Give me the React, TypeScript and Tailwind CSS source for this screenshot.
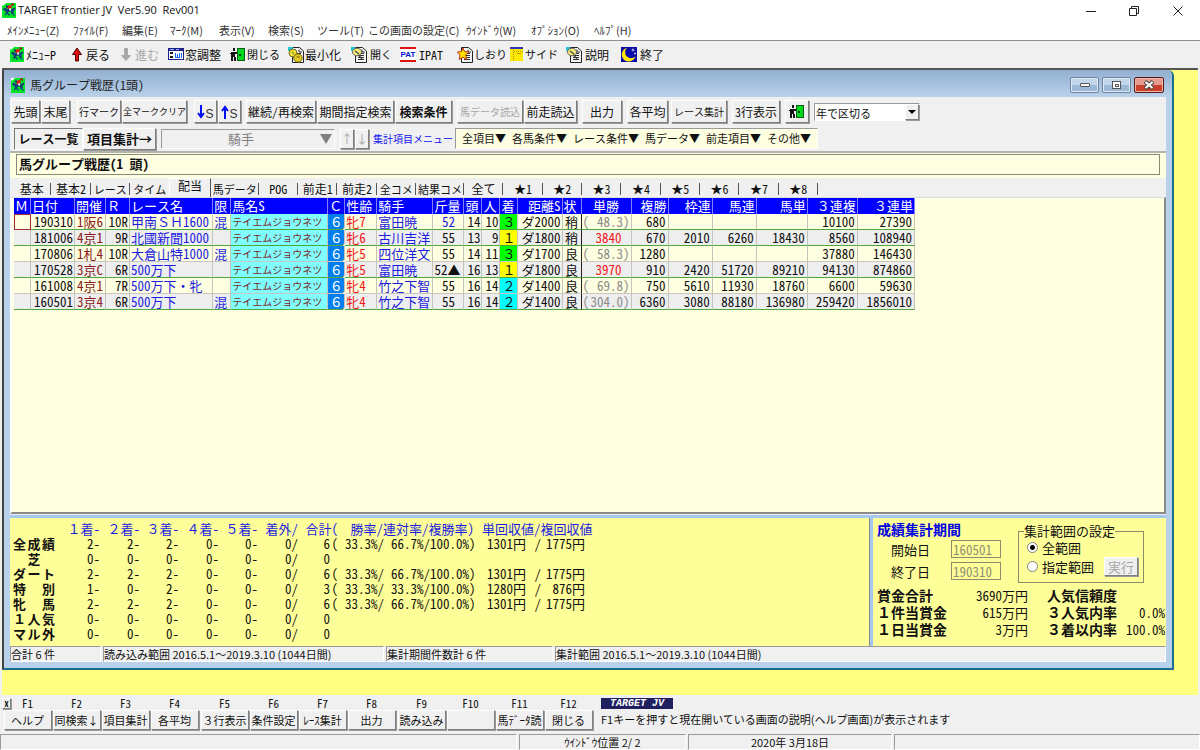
import React from "react";
import clsx from "clsx";

const raised =
  "border border-t-white border-l-white border-r-[#7f7f7f] border-b-[#7f7f7f] shadow-[1px_1px_0_0_#9a9a9a] bg-[#f0f0f0]";
const sunken = "border border-t-[#9a9a9a] border-l-[#9a9a9a] border-r-white border-b-white";

function JockeyIcon() {
  return (
    <svg viewBox="0 0 16 15" className="h-[15px] w-4 shrink-0" aria-hidden="true">
      <rect x="1" width="14" height="15" fill="#00e626" />
      <path d="M1 0h4L2.500 2.500H1z" fill="#ffffff" />
      <path d="M1.500 6.500 4 4.500 6 6H10.500L13.500 4.500 14.500 6 12.500 8 13 10.500 11 10 10 8.500 7.500 9 5 12 3.500 12.500 5 9 3.500 7.500Z" fill="#12407a" />
      <path d="M10 9.500 13.500 12.500M6 9.500 8.500 12.500" stroke="#12407a" strokeWidth="1.200" />
      <path d="M7 2.500 10 2 11 4.500 8.500 6.500 6 5Z" fill="#e01818" />
      <path d="M10 .5H13V2.500H10.500Z" fill="#a01010" />
      <path d="M5 2.500H7V4.500H5Z" fill="#1c2a6a" />
      <path d="M8 5.500H10V7.500H8.500Z" fill="#ffffff" />
    </svg>
  );
}

function ArrowIcon({ fill, stroke, down }: { fill: string; stroke: string; down?: boolean }) {
  return (
    <svg viewBox="0 0 12 15" className="h-[15px] w-3 shrink-0" aria-hidden="true">
      <path
        d={down ? "M6 13.5 1.5 8.5H4.5V1.5H7.5V8.5H10.5Z" : "M6 1 1.5 7.5H4.5V14H7.5V7.5H10.5Z"}
        fill={fill}
        stroke={stroke}
        strokeWidth="1"
      />
    </svg>
  );
}

function PanelIcon() {
  return (
    <svg viewBox="0 0 16 15" className="h-[15px] w-4 shrink-0" shapeRendering="crispEdges" aria-hidden="true">
      <rect x="0" y="1" width="16" height="12" fill="#20208a" />
      <rect x="1" y="4" width="14" height="8" fill="#ffffff" />
      <path d="M2 2h4v1H2zM8 2h3v1H8z" fill="#8fb4ff" />
      <path d="M2 5h3v2H2zM2 9h3v2H2z" fill="#1a1a1a" />
      <path d="M7 6h1v4h1V7h1v3h1V6h1v5H7zM13 6h1v5h-1z" fill="#1565ff" />
    </svg>
  );
}

function DoorIcon() {
  return (
    <svg viewBox="0 0 16 15" className="h-[15px] w-4 shrink-0" shapeRendering="crispEdges" aria-hidden="true">
      <rect x="7" y="1" width="8" height="13" fill="#0a5c14" />
      <rect x="8" y="2" width="6" height="11" fill="#00d81e" />
      <rect x="9" y="7" width="2" height="2" fill="#04410c" />
      <path d="M3 1h2v3H3zM1 5h6v2H5v3h1v4H4v-4H3v4H1V7H0V6z" fill="#151515" />
    </svg>
  );
}

function PageIcon({ badge }: { badge: "coins" | "star" | "note" }) {
  return (
    <svg viewBox="0 0 16 16" className="h-4 w-4 shrink-0" aria-hidden="true">
      <path d="M4.500.5H11.500L15.500 4V15.500H4.500Z" fill="#f4f4f4" stroke="#222" />
      <path d="M7 6.500H13M7 8.500H13M7 10.500H13M7 12.500H13M11 2.500V5H14" stroke="#333" fill="none" />
      {badge === "star" && (
        <path
          d="M6 1 7.500 4.500 11.500 5 8.700 8 9.700 12.500 6 10.300 2.300 12.500 3 8 .5 5 4.500 4.500Z"
          fill="#ffe000"
          stroke="#c02000"
          strokeWidth=".9"
        />
      )}
      {badge === "coins" && (
        <g stroke="#5c4a00" strokeWidth=".8">
          <rect x="0" y="0" width="5" height="4" fill="#23c7d8" stroke="none" />
          <circle cx="5" cy="6" r="4" fill="#f1e23c" />
          <circle cx="10" cy="11" r="4.200" fill="#e2cc20" />
          <path d="M4 4.500 6 7.500M8.500 10H12" />
        </g>
      )}
      {badge === "note" && (
        <g>
          <rect x="0" y="0" width="4" height="4" fill="#23c7d8" />
          <ellipse cx="6" cy="5" rx="4.500" ry="3.800" fill="#f4ec7a" stroke="#555" strokeWidth=".9" />
          <path d="M4 4 8 7M7.500 8 11 12" stroke="#444" strokeWidth="1.200" />
        </g>
      )}
    </svg>
  );
}

function PatIcon() {
  return (
    <span className="flex h-[15px] w-4 shrink-0 items-center justify-center border-y-2 border-[#e01010] bg-white font-['Liberation_Sans'] text-[8px] leading-none font-bold text-[#0010d8]">
      PAT
    </span>
  );
}

function SideIcon() {
  return (
    <svg viewBox="0 0 14 15" className="h-[15px] w-[14px] shrink-0" shapeRendering="crispEdges" aria-hidden="true">
      <rect x="0" y="0" width="13" height="2" fill="#2a35b8" />
      <rect x="0" y="2" width="13" height="12" fill="#ffe800" />
      <path d="M3 3v11M4 4h9" stroke="#b59a00" strokeDasharray="1 1" />
      <rect x="7" y="6" width="4" height="1" fill="#b59a00" />
    </svg>
  );
}

function MoonIcon() {
  return (
    <svg viewBox="0 0 16 15" className="h-[15px] w-4 shrink-0" aria-hidden="true">
      <rect width="16" height="15" fill="#0a0aa8" />
      <path d="M6 0.800A7 7 0 1 0 14.500 9.500A5.200 5.200 0 0 1 6 .8Z" fill="#ffe800" />
      <path d="M12 1.500v3M10.500 3h3M14 5.500v2M13 6.500h2" stroke="#fff" strokeWidth=".7" />
    </svg>
  );
}

const menus: [string, string][] = [
  ["ﾒｲﾝﾒﾆｭｰ(Z)", "w-[66px]"],
  ["ﾌｧｲﾙ(F)", "w-[49px]"],
  ["編集(E)", "w-12"],
  ["ﾏｰｸ(M)", "w-[49px]"],
  ["表示(V)", "w-[49px]"],
  ["検索(S)", "w-[49px]"],
  ["ツール(T)", "w-[51px]"],
  ["この画面の設定(C)", "w-[98px]"],
  ["ｳｲﾝﾄﾞｳ(W)", "w-[65px]"],
  ["ｵﾌﾟｼｮﾝ(O)", "w-[63px]"],
  ["ﾍﾙﾌﾟ(H)", "w-[50px]"],
];

const tools: { label: string; icon: React.ReactNode; width: string; off?: boolean; gap: string; small?: boolean }[] = [
  { label: "ﾒﾆｭｰP", icon: <JockeyIcon />, width: "w-[62px]", gap: "gap-px" },
  { label: "戻る", icon: <ArrowIcon fill="#e01010" stroke="#500000" />, width: "w-[49px]", gap: "gap-[3px]" },
  { label: "進む", icon: <ArrowIcon fill="#a8a8a8" stroke="#a8a8a8" down />, width: "w-12", off: true, gap: "gap-[3px]" },
  { label: "窓調整", icon: <PanelIcon />, width: "w-[62px]", gap: "gap-px" },
  { label: "閉じる", icon: <DoorIcon />, width: "w-[58px]", gap: "gap-px", small: true },
  { label: "最小化", icon: <PageIcon badge="coins" />, width: "w-[63px]", gap: "gap-px" },
  { label: "開く", icon: <PageIcon badge="note" />, width: "w-[49px]", gap: "gap-[3px]", small: true },
  { label: "IPAT", icon: <PatIcon />, width: "w-[57px]", gap: "gap-[3px]" },
  { label: "しおり", icon: <PageIcon badge="star" />, width: "w-[53px]", gap: "gap-px", small: true },
  { label: "サイド", icon: <SideIcon />, width: "w-14", gap: "gap-px", small: true },
  { label: "説明", icon: <PageIcon badge="note" />, width: "w-[55px]", gap: "gap-[3px]" },
  { label: "終了", icon: <MoonIcon />, width: "w-[50px]", gap: "gap-[3px]" },
];

function Btn({ children, className, disabled, label }: { children: React.ReactNode; className: string; disabled?: boolean; label?: string }) {
  return (
    <button
      type="button"
      disabled={disabled}
      aria-label={label}
      className={clsx(
        "flex shrink-0 items-center justify-center whitespace-nowrap",
        raised,
        disabled && "text-[#a6a6a6]",
        className,
      )}
    >
      {children}
    </button>
  );
}

function SortIcon({ up }: { up?: boolean }) {
  return (
    <svg viewBox="0 0 8 14" className="h-[14px] w-2" aria-hidden="true">
      <path d={up ? "M4 14V2M1 6 4 2 7 6" : "M4 0V12M1 8 4 12 7 8"} fill="none" stroke="#0010f0" strokeWidth="2" />
    </svg>
  );
}

const tabs = [
  "基本", "基本2", "レース", "タイム", "配当", "馬データ", "POG", "前走1", "前走2", "全コメ", "結果コメ", "全て",
  "★1", "★2", "★3", "★4", "★5", "★6", "★7", "★8",
];
const kanaTabs = ["レース", "タイム", "馬データ", "全コメ", "結果コメ"];

const cols: { head: string; width: string; align?: string }[] = [
  { head: "Ｍ", width: "w-[17px]" },
  { head: "日付", width: "w-11" },
  { head: "開催", width: "w-[31px]" },
  { head: "Ｒ", width: "w-6" },
  { head: "レース名", width: "w-[83px]" },
  { head: "限", width: "w-[18px]" },
  { head: "馬名S", width: "w-[97px]" },
  { head: "Ｃ", width: "w-[17px]" },
  { head: "性齢", width: "w-8" },
  { head: "騎手", width: "w-14" },
  { head: "斤量", width: "w-[31px]" },
  { head: "頭", width: "w-[18px]" },
  { head: "人", width: "w-[18px]" },
  { head: "着", width: "w-[18px]" },
  { head: "距離S", width: "w-11", align: "text-right" },
  { head: "状", width: "w-[19px]" },
  { head: "単勝", width: "w-[50px]", align: "text-center" },
  { head: "複勝", width: "w-[37px]", align: "text-right" },
  { head: "枠連", width: "w-11", align: "text-right" },
  { head: "馬連", width: "w-11", align: "text-right" },
  { head: "馬単", width: "w-[51px]", align: "text-right" },
  { head: "３連複", width: "w-[50px]", align: "text-right" },
  { head: "３連単", width: "w-[57px]", align: "text-right" },
];

type Row = {
  date: string; place: string; r: string; race: string; lim: string; sex: string; jockey: string; weight: string;
  heads: string; pop: string; rank: string; dist: string; cond: string; win: string; pays: string[];
};

const rows: Row[] = [
  { date: "190310", place: "1阪6", r: "10R", race: "甲南ＳＨ1600", lim: "混", sex: "牝7", jockey: "富田暁", weight: "52", heads: "14", pop: "10", rank: "３", dist: "ダ2000", cond: "稍", win: "(48.3)", pays: ["680", "", "", "", "10100", "27390"] },
  { date: "181006", place: "4京1", r: "9R", race: "北國新聞1000", lim: "", sex: "牝6", jockey: "古川吉洋", weight: "55", heads: "13", pop: "9", rank: "１", dist: "ダ1800", cond: "稍", win: "3840", pays: ["670", "2010", "6260", "18430", "8560", "108940"] },
  { date: "170806", place: "1札4", r: "10R", race: "大倉山特1000", lim: "混", sex: "牝5", jockey: "四位洋文", weight: "55", heads: "14", pop: "11", rank: "３", dist: "ダ1700", cond: "良", win: "(58.3)", pays: ["1280", "", "", "", "37880", "146430"] },
  { date: "170528", place: "3京C", r: "6R", race: "500万下", lim: "", sex: "牝5", jockey: "富田暁", weight: "52▲", heads: "16", pop: "13", rank: "１", dist: "ダ1800", cond: "良", win: "3970", pays: ["910", "2420", "51720", "89210", "94130", "874860"] },
  { date: "161008", place: "4京1", r: "7R", race: "500万下・牝", lim: "", sex: "牝4", jockey: "竹之下智", weight: "55", heads: "16", pop: "14", rank: "２", dist: "ダ1400", cond: "良", win: "(69.8)", pays: ["750", "5610", "11930", "18760", "6600", "59630"] },
  { date: "160501", place: "3京4", r: "6R", race: "500万下", lim: "混", sex: "牝4", jockey: "竹之下智", weight: "55", heads: "16", pop: "14", rank: "２", dist: "ダ1400", cond: "良", win: "(304.0)", pays: ["6360", "3080", "88180", "136980", "259420", "1856010"] },
];

const rankColor: Record<string, string> = { "１": "bg-[#ffff00]", "２": "bg-[#00ffff]", "３": "bg-[#00ff00]" };

function RaceRow({ row, index }: { row: Row; index: number }) {
  const line = index === 2 || index === 4 ? "border-b-[#c8c8c0]" : "border-b-[#4fa83c]";
  const base = clsx("h-4 border-r border-b p-0 leading-[15px] whitespace-nowrap", line);
  const td = clsx(base, "border-r-[#c4c4b8] px-px");
  return (
    <tr className={index % 2 ? "bg-[#eeeeee]" : "bg-[#ffffe1]"}>
      <td className={clsx(td, index === 0 && "outline -outline-offset-1 outline-[#a03030]")} />
      <td className={clsx(td, "text-right")}>{row.date}</td>
      <td className={clsx(td, "text-center text-[#8b1a1a]")}>{row.place}</td>
      <td className={clsx(td, "text-right")}>{row.r}</td>
      <td className={clsx(td, "text-[#1c1ce0]")}>{row.race}</td>
      <td className={clsx(td, "text-[#1c1ce0]")}>{row.lim}</td>
      <td className={clsx(td, "bg-[#80ffff] text-[10px] text-[#7a1f1f]")}>テイエムジョウネツ</td>
      <td className={clsx(td, "rounded-br-sm bg-[#0080f0] text-center text-white")}>６</td>
      <td className={clsx(td, "text-[#f01818]")}>{row.sex}</td>
      <td className={clsx(td, "text-[#1c1ce0]")}>{row.jockey}</td>
      <td className={clsx(td, row.weight === "52▲" ? "text-left" : "text-center", index === 0 && "text-[#1c1ce0]")}>{row.weight}</td>
      <td className={clsx(td, "text-right")}>{row.heads}</td>
      <td className={clsx(td, "text-right")}>{row.pop}</td>
      <td className={clsx(td, "text-center", rankColor[row.rank])}>{row.rank}</td>
      <td className={clsx(td, "text-right")}>{row.dist}</td>
      <td className={clsx(base, "border-r-[#202020] px-px text-center")}>{row.cond}</td>
      <td className={td}>
        {row.win.startsWith("(") ? (
          <span className="flex justify-between text-[#8a8a8a]">
            <span>(</span>
            <span>{row.win.slice(1)}</span>
          </span>
        ) : (
          <span className="block pr-2 text-right text-[#f01818]">{row.win}</span>
        )}
      </td>
      {row.pays.map((p, i) => (
        <td key={i} className={clsx(base, "border-r-[#c4c4b8] pr-[2px] text-right")}>{p}</td>
      ))}
    </tr>
  );
}

const statHead = ["１着-", "２着-", "３着-", "４着-", "５着-", "着外/"];
const stats: [string[], string[], string[]][] = [
  [["全", "成", "績"], ["2", "2", "2", "0", "0", "0", "6"], ["33.3", "66.7", "100.0", "1301", "1775"]],
  [["芝"], ["0", "0", "0", "0", "0", "0", "0"], []],
  [["ダ", "ー", "ト"], ["2", "2", "2", "0", "0", "0", "6"], ["33.3", "66.7", "100.0", "1301", "1775"]],
  [["特", "別"], ["1", "0", "2", "0", "0", "0", "3"], ["33.3", "33.3", "100.0", "1280", "876"]],
  [["牝", "馬"], ["2", "2", "2", "0", "0", "0", "6"], ["33.3", "66.7", "100.0", "1301", "1775"]],
  [["１", "人", "気"], ["0", "0", "0", "0", "0", "0", "0"], []],
  [["マ", "ル", "外"], ["0", "0", "0", "0", "0", "0", "0"], []],
];

function StatsTable() {
  return (
    <table className="w-[580px] table-fixed border-collapse text-[13px] leading-[15px]">
      <colgroup>
        <col className="w-[47px]" />
        <col className="w-10" />
        <col className="w-10" />
        <col className="w-[39px]" />
        <col className="w-10" />
        <col className="w-[39px]" />
        <col className="w-10" />
        <col className="w-8" />
        <col className="w-2" />
        <col className="w-[46px]" />
        <col className="w-[46px]" />
        <col className="w-11" />
        <col className="w-[52px]" />
        <col className="w-[15px]" />
        <col className="w-[52px]" />
      </colgroup>
      <thead>
        <tr className="text-[#1c1ce0]">
          <th />
          {statHead.map((h) => (
            <th key={h} scope="col" className="h-[15px] p-0 text-right font-normal whitespace-nowrap">{h}</th>
          ))}
          <th scope="col" colSpan={2} className="p-0 text-right font-normal whitespace-nowrap">合計(</th>
          <th scope="col" colSpan={3} className="p-0 text-right font-normal whitespace-nowrap">勝率/連対率/複勝率)</th>
          <th scope="col" colSpan={3} className="p-0 pl-2 text-left font-normal whitespace-nowrap">単回収値/複回収値</th>
        </tr>
      </thead>
      <tbody>
        {stats.map(([name, counts, rates], i) => (
          <tr key={i}>
            <th scope="row" className="h-[15px] p-0 font-bold">
              <span className={clsx("flex w-[42px]", name.length === 1 ? "justify-center" : "justify-between")}>
                {name.map((c) => (
                  <span key={c}>{c}</span>
                ))}
              </span>
            </th>
            {counts.map((c, k) => (
              <td key={k} className="p-0 text-right">{c}{k < 5 ? "-" : k === 5 ? "/" : ""}</td>
            ))}
            {rates.length > 0 && (
              <>
                <td className="p-0 text-right">(</td>
                <td className="p-0 text-right">{rates[0]}%/</td>
                <td className="p-0 text-right">{rates[1]}%/</td>
                <td className="p-0 text-right">{rates[2]}%)</td>
                <td className="p-0 text-right whitespace-nowrap">{rates[3]}円</td>
                <td className="p-0 text-right">/</td>
                <td className="p-0 pr-2 text-right whitespace-nowrap">{rates[4]}円</td>
              </>
            )}
          </tr>
        ))}
      </tbody>
    </table>
  );
}

function PeriodPanel() {
  const field = "h-[18px] w-[50px] border border-[#8c8c6a] bg-transparent px-px text-[13px] leading-none text-[#8f8f70]";
  return (
    <section className="w-[293px] shrink-0 bg-[#ffff99] pt-[3px] pr-px pl-1 text-[13px] leading-[17px]">
      <div className="flex">
        <div className="w-[141px]">
          <h2 className="text-[14px] leading-[17px] font-bold text-[#0000e0]">成績集計期間</h2>
          <label className="flex h-[22px] items-center justify-between pr-[17px] pl-[14px]">
            開始日
            <input className={field} defaultValue="160501" disabled />
          </label>
          <label className="flex h-[22px] items-center justify-between pr-[17px] pl-[14px]">
            終了日
            <input className={field} defaultValue="190310" disabled />
          </label>
        </div>
        <fieldset className="mt-[2px] h-[60px] w-[126px] border border-[#8c8c6a] px-[5px]">
          <legend className="leading-4">集計範囲の設定</legend>
          <label className="flex h-4 items-center gap-1 pl-[3px]">
            <input type="radio" name="range" defaultChecked className="h-[11px] w-[11px] appearance-none rounded-full border border-[#808080] bg-white bg-[radial-gradient(circle,#000_2px,transparent_3px)]" />
            全範囲
          </label>
          <div className="flex h-[22px] items-center justify-between pl-[3px]">
            <label className="flex items-center gap-1">
              <input type="radio" name="range" className="h-[11px] w-[11px] appearance-none rounded-full border border-[#808080] bg-white" />
              指定範囲
            </label>
            <Btn disabled className="h-[19px] w-[34px] text-[13px]">実行</Btn>
          </div>
        </fieldset>
      </div>
      <dl className="mt-1 grid grid-cols-[72px_79px_19px_72px_1fr] leading-[17px] whitespace-nowrap [&>dt]:text-[14px] [&>dt]:font-bold">
        <dt>賞金合計</dt>
        <dd className="text-right">3690万円</dd>
        <dt className="col-start-4">人気信頼度</dt>
        <dd />
        <dt>１件当賞金</dt>
        <dd className="text-right">615万円</dd>
        <dt className="col-start-4">３人気内率</dt>
        <dd className="text-right">0.0%</dd>
        <dt>１日当賞金</dt>
        <dd className="text-right">3万円</dd>
        <dt className="col-start-4">３着以内率</dt>
        <dd className="text-right">100.0%</dd>
      </dl>
    </section>
  );
}

const fkeys: [string, string][][] = [
  [["F1", "ヘルプ"], ["F2", "同検索↓"], ["F3", "項目集計"], ["F4", "各平均"]],
  [["F5", "３行表示"], ["F6", "条件設定"], ["F7", "ﾚｰｽ集計"], ["F8", "出力"]],
  [["F9", "読み込み"], ["F10", ""], ["F11", "馬ﾃﾞｰﾀ読"], ["F12", "閉じる"]],
];

function ChildWindow() {
  const caption = "flex h-4 w-[29px] items-center justify-center rounded-[2px] border border-[#6d84a0] shadow-[inset_0_0_0_1px_#dce9f7]";
  return (
    <section className="mr-[24px] mb-[25px] flex min-h-0 flex-1 flex-col rounded-tr-md border-r-2 border-b-2 border-l-2 border-[#1b6f8a] border-l-[#444] bg-[#b9d1ea] px-[6px] pb-[6px]">
      <header className="-mx-[6px] flex h-[27px] shrink-0 items-center gap-[3px] rounded-tr-md bg-linear-to-b from-[#93b0d2] to-[#b9d1ea] pt-[3px] pr-[8px] pl-[6px]">
        <JockeyIcon />
        <h1 className="ml-px flex-1 text-[12px] font-normal text-[#222]">馬グループ戦歴(1頭)</h1>
        <button type="button" aria-label="最小化" className={clsx(caption, "bg-linear-to-b from-[#c3d6eb] from-50% to-[#9db9d8] to-50%")}>
          <span className="h-1 w-[10px] rounded-[1px] border border-[#555] bg-white" />
        </button>
        <button type="button" aria-label="最大化" className={clsx(caption, "bg-linear-to-b from-[#c3d6eb] from-50% to-[#9db9d8] to-50%")}>
          <span className="flex h-2 w-[9px] items-center justify-center border border-[#555] bg-white">
            <span className="h-[3px] w-1 border border-[#555]" />
          </span>
        </button>
        <button type="button" aria-label="閉じる" className="flex h-4 w-[30px] items-center justify-center rounded-[2px] border border-[#5a1a14] bg-linear-to-b from-[#e49b8e] from-50% to-[#c9402c] to-50% shadow-[inset_0_0_0_1px_#eeb5aa]">
          <svg viewBox="0 0 12 10" className="h-[10px] w-3" aria-hidden="true">
            <path d="M2 1.500 10 8.500M10 1.500 2 8.500" stroke="#444" strokeWidth="4" />
            <path d="M2.500 2 9.500 8M9.500 2 2.500 8" stroke="#fff" strokeWidth="2.200" />
          </svg>
        </button>
      </header>

      <div className="flex min-h-0 flex-1 flex-col bg-[#f0f0f0]">
        <div className="flex h-[29px] shrink-0 items-center gap-[5px] pl-px text-[12px] [&_button]:h-[23px]">
          <div className="flex gap-px">
            <Btn className="w-[29px]">先頭</Btn>
            <Btn className="w-[29px]">末尾</Btn>
          </div>
          <div className="ml-[2px] flex gap-px">
            <Btn className="w-11 text-[10px]">行マーク</Btn>
            <Btn className="w-[65px] text-[9px]">全マーククリア</Btn>
          </div>
          <div className="ml-[2px] flex gap-px font-['Liberation_Sans'] text-[12px] text-[#333]">
            <Btn className="w-[23px]"><SortIcon /><span className="pt-1">S</span></Btn>
            <Btn className="w-[23px]"><SortIcon up /><span className="pt-1">S</span></Btn>
          </div>
          <div className="flex gap-px">
            <Btn className="w-[70px]">継続/再検索</Btn>
            <Btn className="w-[77px]">期間指定検索</Btn>
            <Btn className="w-[57px] font-bold">検索条件</Btn>
          </div>
          <div className="flex gap-px">
            <Btn disabled className="w-[66px] text-[10px]">馬データ読込</Btn>
            <Btn className="w-[53px]">前走読込</Btn>
          </div>
          <Btn className="w-10">出力</Btn>
          <div className="flex gap-[3px]">
            <Btn className="w-[41px]">各平均</Btn>
            <Btn className="w-[56px] text-[10px]">レース集計</Btn>
          </div>
          <Btn className="w-[48px]">3行表示</Btn>
          <Btn className="w-6" label="閉じる"><DoorIcon /></Btn>
          <div className={clsx("relative h-[18px] w-[106px] bg-white", sunken)}>
            <select aria-label="区切り" className="h-4 w-full appearance-none bg-transparent pl-px text-[11px] leading-4 outline-none">
              <option>年で区切る</option>
            </select>
            <span className={clsx("pointer-events-none absolute top-0 right-0 flex h-4 w-[14px] items-center justify-center", raised)}>
              <svg viewBox="0 0 8 4" className="h-1 w-2" aria-hidden="true"><path d="M0 0H8L4 4Z" /></svg>
            </span>
          </div>
        </div>

        <div className="flex h-[25px] shrink-0 items-center pl-1">
          <button type="button" className="h-[22px] w-[69px] border border-t-[#777] border-r-white border-b-white border-l-[#777] text-[12px] font-bold whitespace-nowrap">レース一覧</button>
          <Btn className="h-[22px] w-[73px] text-[13px] font-bold">項目集計→</Btn>
          <button type="button" disabled className={clsx("ml-[5px] flex h-5 w-[174px] items-center text-[13px] text-[#808080]", sunken)}>
            <span className="flex-1">騎手</span>
            <svg viewBox="0 0 12 10" className="mr-[2px] h-[10px] w-3" aria-hidden="true"><path d="M0 0H12L6 10Z" fill="#808080" /></svg>
          </button>
          <Btn disabled className="ml-[5px] h-5 w-[14px] text-[12px]">↑</Btn>
          <Btn disabled className="ml-px h-5 w-[14px] text-[12px]">↓</Btn>
          <a href="#menu" className="ml-1 w-[82px] text-[10px] whitespace-nowrap text-[#1010f0]">集計項目メニュー</a>
          <nav className={clsx("flex h-[21px] w-[363px] items-center justify-between bg-[#ffffe1] px-[6px] text-[11px]", sunken)}>
            {["全項目", "各馬条件", "レース条件", "馬データ", "前走項目", "その他"].map((t) => (
              <button key={t} type="button" className="whitespace-nowrap">{t}▼</button>
            ))}
          </nav>
        </div>

        <div className="shrink-0 border-t-2 border-[#b4b4ac] bg-[#ffffe1] px-[6px] pt-px pb-[3px]">
          <div className="h-[21px] border border-[#8a8a78] pl-[2px] text-[13px] leading-[18px] font-bold">馬グループ戦歴(1 頭)</div>
        </div>

        <div role="tablist" className="ml-[2px] flex h-[19px] w-[806px] shrink-0 items-end text-[12px]">
          {tabs.map((t) => (
            <button
              key={t}
              type="button"
              role="tab"
              aria-selected={t === "配当"}
              className={clsx(
                "flex min-w-0 items-center justify-center whitespace-nowrap",
                t === "馬データ" || t === "結果コメ" ? "w-12" : "flex-1",
                kanaTabs.includes(t) && "text-[11px]",
                t === "配当"
                  ? "h-[19px] border-t border-r border-l border-t-white border-r-[#555] border-l-white pb-1"
                  : "h-4",
                t !== "配当" && t !== "タイム" && "bg-[linear-gradient(#555,#555)] bg-[length:1px_12px] bg-right bg-no-repeat",
              )}
            >
              {t}
            </button>
          ))}
        </div>

        <div className="min-h-0 flex-1 border-t border-r-2 border-b-2 border-l-2 border-[#8a8a8a] border-t-[#ddd] border-l-white bg-[#ffffe1] pl-[2px]">
          <table className="w-[901px] table-fixed border-separate border-spacing-0 text-[13px]">
            <thead>
              <tr>
                {cols.map((c) => (
                  <th
                    key={c.head}
                    scope="col"
                    className={clsx(
                      "h-4 border-r border-[#8080ff] bg-[#0000ff] p-0 px-px leading-4 font-normal whitespace-nowrap text-white",
                      c.width,
                      c.align ?? "text-left",
                    )}
                  >
                    {c.head}
                  </th>
                ))}
              </tr>
            </thead>
            <tbody>
              {rows.map((r, i) => (
                <RaceRow key={r.date} row={r} index={i} />
              ))}
            </tbody>
          </table>
        </div>

        <div className="mt-px flex h-[131px] shrink-0 border-t-[3px] border-[#a6c8f0]">
          <section className="min-w-0 flex-1 border-r border-[#8a8a8a] bg-[#ffff99] pt-[3px] pl-[3px]">
            <StatsTable />
          </section>
          <div className="w-[3px] bg-[#a6c8f0]" />
          <PeriodPanel />
        </div>

        <footer className="flex h-4 shrink-0 gap-[2px] font-['Noto_Sans_CJK_JP',sans-serif] text-[11px] leading-[15px] whitespace-nowrap">
          <span className={clsx("w-[91px]", sunken)}>合計 6 件</span>
          <span className={clsx("w-[281px]", sunken)}>読み込み範囲 2016.5.1～2019.3.10 (1044日間)</span>
          <span className={clsx("w-[167px]", sunken)}>集計期間件数計 6 件</span>
          <span className={clsx("flex-1", sunken)}>集計範囲 2016.5.1～2019.3.10 (1044日間)</span>
        </footer>
      </div>
    </section>
  );
}

export default function App() {
  return (
    <div className="flex h-screen min-h-[640px] flex-col overflow-hidden bg-[#f0f0f0] font-['Noto_Sans_Mono_CJK_JP','Noto_Sans_CJK_JP',sans-serif] text-[12px] text-[#111]">
      <header className="flex h-[21px] shrink-0 items-center bg-white pl-px">
        <JockeyIcon />
        <span className="ml-px flex-1 font-['Open_Sans','Noto_Sans_CJK_JP',sans-serif] text-[11px] whitespace-pre">TARGET frontier JV  Ver5.90  Rev001</span>
        <div className="flex">
          <button type="button" aria-label="最小化" className="flex w-[43px] justify-center">
            <svg viewBox="0 0 12 12" className="h-3 w-3" aria-hidden="true"><path d="M1 6.500H11" stroke="#222" /></svg>
          </button>
          <button type="button" aria-label="元に戻す" className="flex w-[43px] justify-center">
            <svg viewBox="0 0 12 12" className="h-3 w-3" aria-hidden="true"><path d="M1.500 3.500H8.500V10.500H1.500ZM3.500 3.500V1.500H10.500V8.500H8.500" fill="none" stroke="#222" /></svg>
          </button>
          <button type="button" aria-label="閉じる" className="flex w-[45px] justify-center">
            <svg viewBox="0 0 12 12" className="h-3 w-3" aria-hidden="true"><path d="M1.500 1.500 10.500 10.500M10.500 1.500 1.500 10.500" stroke="#222" /></svg>
          </button>
        </div>
      </header>

      <nav className="flex h-5 shrink-0 items-center border-b border-[#909090] bg-white pl-[7px] font-['Noto_Sans_CJK_JP',sans-serif] text-[11px] text-[#333]">
        {menus.map(([t, w]) => (
          <button key={t} type="button" className={clsx("text-left whitespace-nowrap", w)}>{t}</button>
        ))}
      </nav>

      <div className="flex h-[27px] shrink-0 items-center pl-[9px]">
        {tools.map((t) => (
          <button
            key={t.label}
            type="button"
            disabled={t.off}
            className={clsx(
              "flex items-center whitespace-nowrap",
              t.small ? "text-[11px]" : "text-[12px]",
              t.width,
              t.gap,
              t.off && "text-[#a8a8a8]",
            )}
          >
            {t.icon}
            {t.label}
          </button>
        ))}
      </div>

      <main className="mx-[2px] flex min-h-0 flex-1 flex-col border-t-2 border-[#555] bg-[#ffff80]">
        <ChildWindow />
      </main>

      <div className="flex h-[39px] shrink-0 pt-[3px] pl-[2px]">
        <div className="flex flex-col">
          <button type="button" aria-label="閉じる" className={clsx("h-[11px] w-[9px] text-[8px] leading-[9px] font-bold", raised)}>X</button>
        </div>
        <div className="-ml-[8px] flex gap-px">
          {fkeys.map((group, g) => (
            <div key={g} className="flex">
              {group.map(([k, t]) => (
                <div key={k} className="flex w-[49px] flex-col items-center">
                  <span className="h-[11px] text-[11px] leading-[11px]">{k}</span>
                  <button type="button" aria-label={t || k} className={clsx("mt-px h-5 w-12 text-[11px] leading-[17px] whitespace-nowrap", raised)}>{t}</button>
                </div>
              ))}
            </div>
          ))}
        </div>
        <div className="ml-2">
          <div className="h-[11px] w-[72px] bg-[#202060] text-center font-['Liberation_Mono',monospace] text-[10px] leading-[11px] font-bold text-white italic">TARGET JV</div>
          <div className="mt-[2px] font-['Noto_Sans_CJK_JP',sans-serif] text-[11px] leading-[17px]">F1キーを押すと現在開いている画面の説明(ヘルプ画面)が表示されます</div>
        </div>
      </div>

      <footer className="flex h-4 shrink-0 gap-[2px] font-['Noto_Sans_CJK_JP',sans-serif] text-[11px] leading-[14px]">
        <span className={clsx("w-[517px]", sunken)} />
        <span className={clsx("w-[167px] text-center", sunken)}>ｳｲﾝﾄﾞｳ位置 2/ 2</span>
        <span className={clsx("w-[204px] text-center", sunken)}>2020年 3月18日</span>
        <span className={clsx("flex-1", sunken)} />
      </footer>
    </div>
  );
}
